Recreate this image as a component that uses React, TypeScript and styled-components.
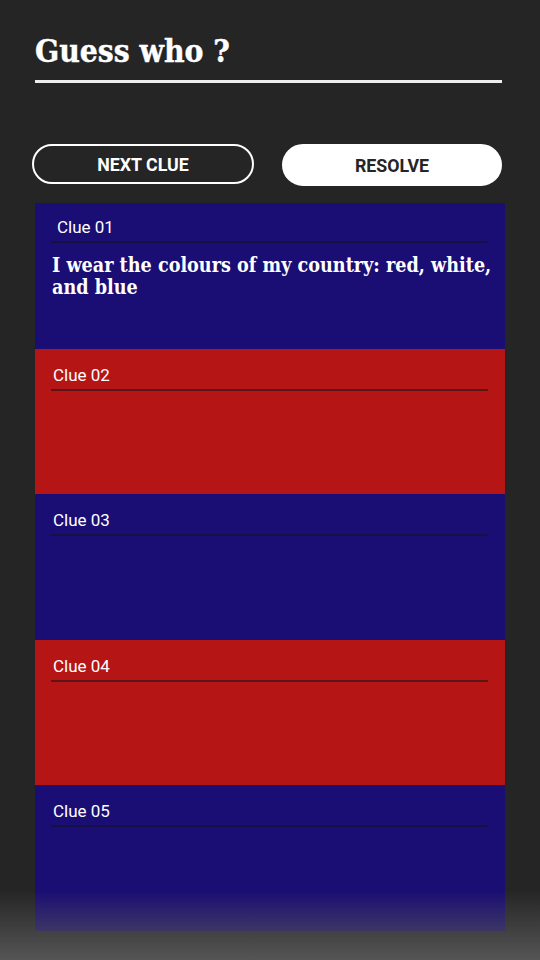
import React from "react";
import styled, { createGlobalStyle } from "styled-components";

const Global = createGlobalStyle`
  html, body { margin: 0; padding: 0; background: #252525; }
  body { width: 540px; min-height: 960px; overflow: hidden; }
`;

const Page = styled.div`
  width: 540px;
  height: 960px;
  background: #252525;
  box-sizing: border-box;
  padding: 31px 35px 0 35px;
  display: flex;
  flex-direction: column;
  position: relative;
  overflow: hidden;
`;

const Title = styled.h1`
  margin: 0 3px 0 0;
  font-family: "DejaVu Serif Condensed", "DejaVu Serif", serif;
  font-weight: bold;
  font-size: 31.5px;
  line-height: 40px;
  color: #ffffff;
  padding-bottom: 9px;
  border-bottom: 3px solid #eeeeee;
  -webkit-text-stroke: 0.4px #ffffff;
`;

const ButtonRow = styled.div`
  display: grid;
  grid-template-columns: 222px 220px;
  justify-content: space-between;
  margin: 61px 3px 17px -3px;
  align-items: start;
`;

const Button = styled.button<{ $filled?: boolean }>`
  font-family: Roboto, "Liberation Sans", sans-serif;
  font-weight: bold;
  font-size: 17.8px;
  text-transform: uppercase;
  height: ${(p) => (p.$filled ? "42px" : "40px")};
  border-radius: 21px;
  border: 2px solid #ffffff;
  background: ${(p) => (p.$filled ? "#ffffff" : "transparent")};
  color: ${(p) => (p.$filled ? "#252525" : "#ffffff")};
  padding: 0;
  cursor: pointer;
`;

const List = styled.div`
  display: flex;
  flex-direction: column;
  width: 470px;
`;

const Card = styled.div<{ $red?: boolean; $first?: boolean }>`
  height: 145.6px;
  flex: none;
  box-sizing: border-box;
  background: ${(p) => (p.$red ? "#b51615" : "#1a0d73")};
  padding: ${(p) => (p.$first ? "13px 17px 0 16px" : "15px 17px 0 16px")};
  display: flex;
  flex-direction: column;
`;

const Label = styled.div<{ $first?: boolean }>`
  font-family: Roboto, "Liberation Sans", sans-serif;
  font-size: 17px;
  line-height: 22px;
  color: #ffffff;
  padding: 0 0 3px ${(p) => (p.$first ? "6px" : "2px")};
  border-bottom: 2px solid rgba(20, 20, 30, 0.55);
`;

const Text = styled.p`
  margin: 12px -14px 0 1px;
  font-family: "DejaVu Serif Condensed", "DejaVu Serif", serif;
  font-weight: bold;
  font-size: 19.6px;
  line-height: 22px;
  color: #ffffff;
`;

const Fade = styled.div`
  position: absolute;
  left: 0;
  right: 0;
  bottom: 0;
  height: 70px;
  background: linear-gradient(to bottom, rgba(90, 90, 90, 0) 0%, rgba(90, 90, 90, 0.45) 50%, rgba(85, 85, 85, 1) 100%);
  pointer-events: none;
`;

const clues = [
  { n: "01", text: "I wear the colours of my country: red, white, and blue" },
  { n: "02" },
  { n: "03" },
  { n: "04" },
  { n: "05" },
];

export default function App() {
  return (
    <>
      <Global />
      <Page>
        <Title>Guess who ?</Title>
        <ButtonRow>
          <Button>Next clue</Button>
          <Button $filled>Resolve</Button>
        </ButtonRow>
        <List>
          {clues.map((c, i) => (
            <Card key={c.n} $red={i % 2 === 1} $first={i === 0}>
              <Label $first={i === 0}>Clue {c.n}</Label>
              {c.text && <Text>{c.text}</Text>}
            </Card>
          ))}
        </List>
        <Fade />
      </Page>
    </>
  );
}
